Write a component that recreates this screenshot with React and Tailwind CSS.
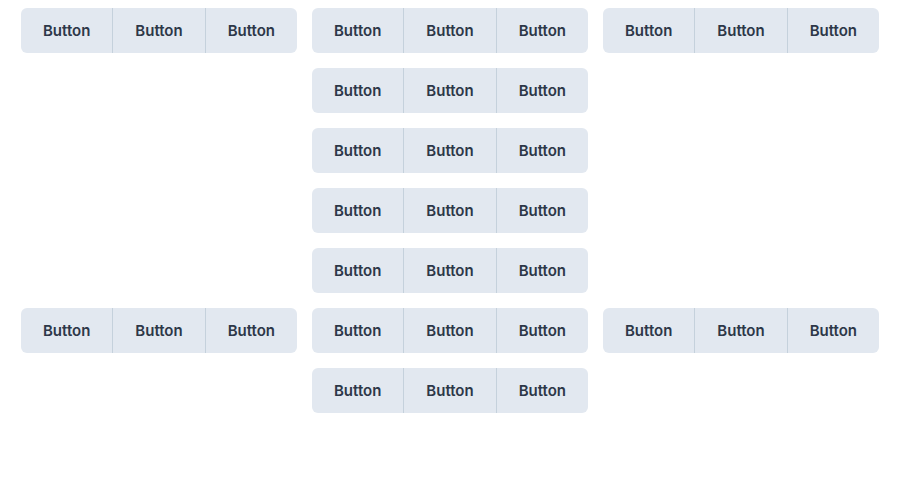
import React from "react";

function Group() {
  return (
    <div className="flex h-[45px] w-[276px] overflow-hidden rounded-md bg-[#e2e8f0]">
      {[0, 1, 2].map((i) => (
        <div
          key={i}
          className={
            "flex flex-1 items-center justify-center pt-[2px] text-[15px] font-semibold text-[#2d3748] " +
            (i > 0 ? "border-l border-[#c5d1dc]" : "")
          }
        >
          Button
        </div>
      ))}
    </div>
  );
}

export default function App() {
  const rows = 7;
  const cells = [];
  for (let r = 0; r < rows; r++) {
    for (let c = 0; c < 3; c++) {
      const show = c === 1 || r === 0 || r === 5;
      cells.push(
        <div key={r + "-" + c} className="h-[45px]">
          {show ? <Group /> : null}
        </div>
      );
    }
  }
  return (
    <div
      className="h-[500px] w-[900px] bg-white pl-[21px] pt-[8px]"
      style={{ fontFamily: "Inter, 'Noto Sans', sans-serif" }}
    >
      <div className="grid grid-cols-[276px_276px_276px] gap-[15px]">{cells}</div>
    </div>
  );
}
